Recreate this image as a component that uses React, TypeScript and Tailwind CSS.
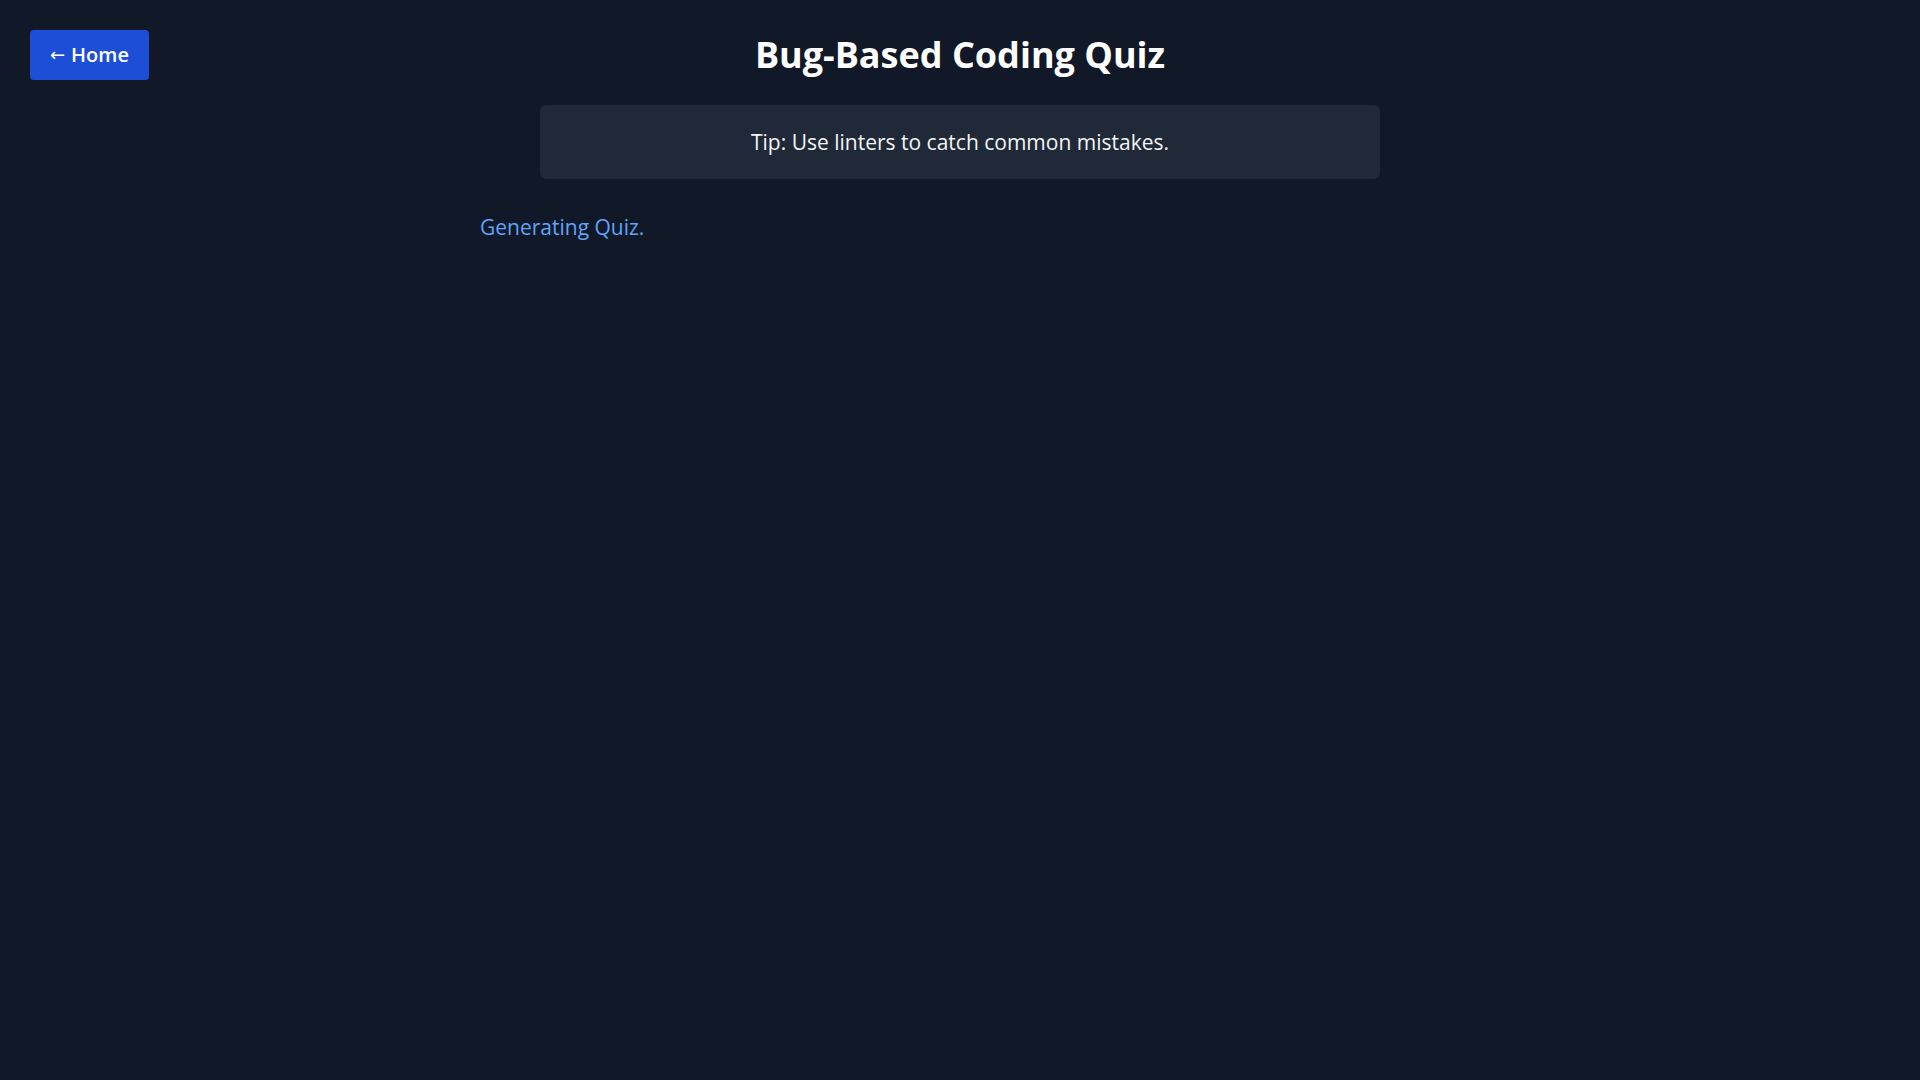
import React from "react";

const App = () => {
  return (
    <div className="min-h-screen w-full bg-[#111827] text-white font-['Open_Sans',sans-serif]">
      <div className="grid grid-cols-[1fr_auto_1fr] items-center px-[30px] pt-[30px]">
        <div>
          <button className="flex h-[50px] items-center gap-[6px] rounded bg-[#1d4ed8] px-[20px] text-xl font-semibold leading-7 text-white">
            <span className="font-['DejaVu_Sans',sans-serif] text-[18px] font-normal leading-none">←</span>
            <span>Home</span>
          </button>
        </div>
        <h1 className="text-[36px] font-bold leading-10">Bug-Based Coding Quiz</h1>
        <div />
      </div>

      <div className="mx-auto mt-[25px] w-[840px] rounded-md bg-[#1f2937] py-[23px] text-center text-[21px] leading-7 text-gray-100">
        Tip: Use linters to catch common mistakes.
      </div>

      <div className="mx-auto mt-8 w-[960px]">
        <p className="text-[21px] leading-8 text-[#60a5fa]">Generating Quiz.</p>
      </div>
    </div>
  );
};

export default App;
